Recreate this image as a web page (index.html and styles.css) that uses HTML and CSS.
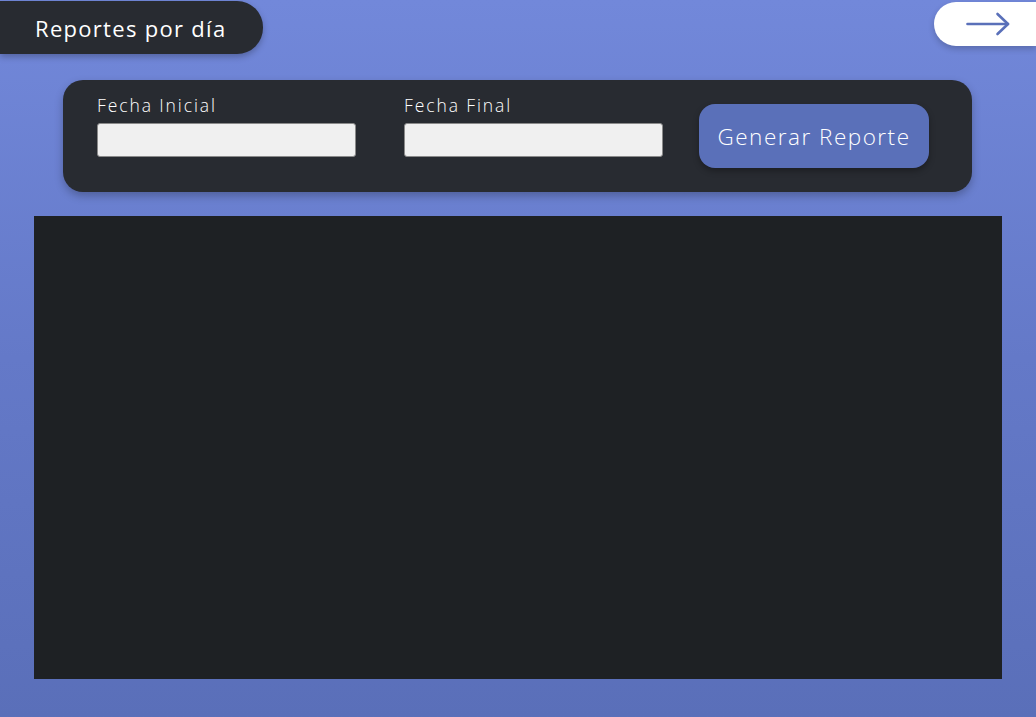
FILE: index.html
```html
<!DOCTYPE html>
<html lang="es">
<head>
<meta charset="utf-8">
<title>Reportes por día</title>
<link rel="stylesheet" href="styles.css">
</head>
<body>
<div class="page">
  <header class="topbar">
    <div class="title-pill">Reportes por día</div>
    <button class="next-btn" aria-label="Siguiente">
      <svg width="44" height="24" viewBox="0 0 44 24" fill="none" stroke="#5a70b9" stroke-width="2.6" stroke-linecap="round" stroke-linejoin="round">
        <path d="M1.5 12 H42"/>
        <path d="M31.5 2 L42 12 L31.5 22"/>
      </svg>
    </button>
  </header>
  <section class="form-card">
    <div class="field">
      <label class="field-label">Fecha Inicial</label>
      <input class="field-input" type="text">
    </div>
    <div class="field">
      <label class="field-label">Fecha Final</label>
      <input class="field-input" type="text">
    </div>
    <button class="generate-btn">Generar Reporte</button>
  </section>
  <section class="report-area"></section>
</div>
</body>
</html>
```

FILE: styles.css
```css
html, body {
  margin: 0;
  padding: 0;
}
body {
  width: 1036px;
  height: 717px;
  overflow: hidden;
  background: linear-gradient(180deg, #7288da 0%, #6479c8 50%, #5a6fb9 100%);
  font-family: "Open Sans", "Noto Sans", sans-serif;
}
.page {
  display: flex;
  flex-direction: column;
}
.topbar {
  display: flex;
  justify-content: space-between;
  align-items: flex-start;
  height: 54px;
}
.title-pill {
  margin-top: 1px;
  height: 53px;
  box-sizing: border-box;
  padding: 0 0 0 35px;
  width: 263px;
  display: flex;
  align-items: center;
  background: #282b31;
  color: #ffffff;
  font-size: 22px;
  font-weight: 500;
  border-radius: 0 26px 26px 0;
  box-shadow: 0 3px 6px rgba(0, 0, 0, 0.25);
  letter-spacing: 1.3px;
  white-space: nowrap;
}
.next-btn {
  margin-top: 2px;
  width: 102px;
  height: 44px;
  border: none;
  padding: 0 0 0 6px;
  background: #ffffff;
  border-radius: 22px 0 0 22px;
  display: flex;
  align-items: center;
  justify-content: center;
  box-shadow: 0 3px 6px rgba(0, 0, 0, 0.2);
  cursor: pointer;
}
.form-card {
  margin: 26px 64px 0 63px;
  height: 112px;
  box-sizing: border-box;
  padding: 15px 0 0 34px;
  display: flex;
  align-items: flex-start;
  background: #282b31;
  border-radius: 20px;
  box-shadow: 0 4px 8px rgba(0, 0, 0, 0.25);
}
.field {
  display: flex;
  flex-direction: column;
  width: 259px;
  margin-right: 48px;
}
.field:nth-child(2) {
  margin-right: 36px;
}
.field-label {
  color: #ffffff;
  font-size: 17.5px;
  font-weight: 300;
  line-height: 20px;
  letter-spacing: 1.9px;
  white-space: nowrap;
}
.field-input {
  margin-top: 8px;
  height: 34px;
  box-sizing: border-box;
  background: #f0f0f0;
  border: 1px solid #8a8a8a;
  border-radius: 3px;
  outline: none;
}
.generate-btn {
  margin-top: 9px;
  width: 230px;
  height: 64px;
  padding: 0;
  border: none;
  border-radius: 16px;
  background: #5a70b9;
  color: #ffffff;
  font-family: "Open Sans", "Noto Sans", sans-serif;
  font-size: 22.5px;
  font-weight: 300;
  letter-spacing: 1.5px;
  box-shadow: 0 3px 6px rgba(0, 0, 0, 0.3);
  cursor: pointer;
  white-space: nowrap;
}
.report-area {
  margin: 24px 34px 0 34px;
  height: 463px;
  background: #1e2124;
}
```
